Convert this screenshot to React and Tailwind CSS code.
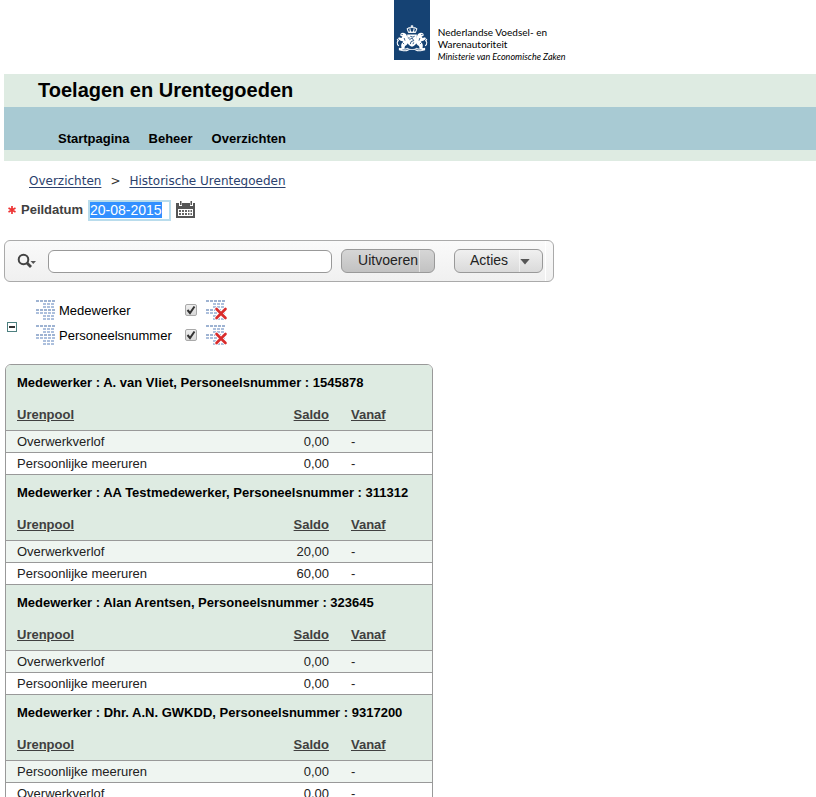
import { useEffect, useRef } from "react";

const groups = [
  { name: "A. van Vliet", number: "1545878", rows: [["Overwerkverlof", "0,00"], ["Persoonlijke meeruren", "0,00"]] },
  { name: "AA Testmedewerker", number: "311312", rows: [["Overwerkverlof", "20,00"], ["Persoonlijke meeruren", "60,00"]] },
  { name: "Alan Arentsen", number: "323645", rows: [["Overwerkverlof", "0,00"], ["Persoonlijke meeruren", "0,00"]] },
  { name: "Dhr. A.N. GWKDD", number: "9317200", rows: [["Persoonlijke meeruren", "0,00"], ["Overwerkverlof", "0,00"]] },
];

function Lion() {
  return (
    <g>
      <path d="M12 13c-1-3-5-4-7-2c-1 2 0 3 2 3l-1 2l-3-1l-1 2l3 2l3 1c-2 2-3 4-2 7l-2 2h5l1-4c2-1 4-3 4-6z" fill="#fff" />
      <path d="M3 25c-3-2-2-6 0-6M2 19l-1-2" stroke="#fff" strokeWidth="1.2" fill="none" />
      <path d="M6 12h1.500M9 16l1 3M7 21l2 2" stroke="#154273" strokeWidth=".9" />
    </g>
  );
}

function CoatOfArms() {
  return (
    <svg width="32" height="28" viewBox="0 0 36 32" aria-hidden="true">
      <Lion />
      <g transform="translate(36 0) scale(-1 1)"><Lion /></g>
      <path d="M18 1v3M16.500 2.500h3M12.500 5.500c2-2 9-2 11 0l-1.500 4h-8z" stroke="#fff" strokeWidth="1.200" fill="none" />
      <path d="M15.500 5l.8 4M20.500 5l-.8 4M14 9.500h8" stroke="#fff" strokeWidth="1.200" />
      <path d="M12.500 12h11v8c0 3-3 5-5.500 6c-2.500-1-5.500-3-5.500-6z" fill="#fff" />
      <path d="M16 14l3 1l2-1M15 18l3-2l2 3l-3 1l-1 3M20 21l-1 2M14.500 15v2" stroke="#154273" strokeWidth="1" fill="none" />
      <path d="M3 27l4 1h4l2-1c3 2 7 2 10 0l2 1h4l4-1v3l-5 1h-4c-4-2-8-2-12 0h-4l-5-1z" fill="#fff" />
      <path d="M7 29.500h4c4-2 10-2 14 0h4" stroke="#154273" strokeWidth=".7" fill="none" />
    </svg>
  );
}

function CalendarIcon() {
  return (
    <svg width="20" height="18" viewBox="0 0 20 18" aria-hidden="true">
      <path d="M0 2h3v3h3V2h8v3h3V2h2v15H0z" fill="#555" />
      <path d="M4 0h1.500v4H4zM14.500 0H16v4h-1.500z" fill="#555" />
      <path d="M2 8h15v7H2z" fill="#fff" />
      <path d="M3 9h2v2H3zM6 9h2v2H6zM9 9h2v2H9zM12 9h1.500v2H12zM14.500 9H16v2h-1.500zM3 12h2v2H3zM6 12h2v2H6zM9 12h2v2H9zM12 12h1.500v2H12zM14.500 12H16v2h-1.500z" fill="#666" />
    </svg>
  );
}

const bars = [0, 1, 2, 3, 4, 5, 6];

function BreakIcon({ remove }) {
  return (
    <svg width="22" height="20" viewBox="0 0 22 20" aria-hidden="true">
      {bars.map((i) => (
        <path
          key={i}
          d={i === 0 || i === 3 || i === 4 ? `M0 ${i * 3 + 1}H19` : `M7 ${i * 3 + 1}H19`}
          stroke={i === 0 || i === 3 ? "#7f9bc4" : "#93acd2"}
          strokeWidth="1.500"
          strokeDasharray="3 1"
        />
      ))}
      {remove && (
        <g fill="none" strokeLinecap="round">
          <path d="M10.500 9l9 9M19.500 9l-9 9" stroke="#fff" strokeWidth="4" />
          <path d="M10.500 9l9 9M19.500 9l-9 9" stroke="#d92b2b" strokeWidth="2.600" />
        </g>
      )}
    </svg>
  );
}

function BreakRow({ label }) {
  return (
    <li className="flex h-[25px] items-center">
      <BreakIcon />
      <label className="flex grow items-center text-black">
        <span className="w-[127px] pt-0.5 pl-px">{label}</span>
        <span className="grid">
          <input
            type="checkbox"
            defaultChecked
            className="peer col-start-1 row-start-1 size-3 appearance-none rounded-xs border border-[#a9a9a9] bg-linear-to-b from-[#eeeeee] to-[#d9d9d9]"
          />
          <svg className="pointer-events-none col-start-1 row-start-1 hidden peer-checked:block" width="12" height="12" viewBox="0 0 12 12" aria-hidden="true">
            <path d="M2.500 6l2.500 3L9.500 2.500" stroke="#333" strokeWidth="2" fill="none" />
          </svg>
        </span>
      </label>
      <button type="button" aria-label={`${label} verwijderen`}>
        <BreakIcon remove />
      </button>
    </li>
  );
}

function Heading({ children, className }) {
  return (
    <th scope="col" className={`h-[33px] border-b border-[#999] px-[11px] pt-0.5 ${className}`}>
      <a href="#sort" className="text-[#404040] underline underline-offset-1">{children}</a>
    </th>
  );
}

export default function App() {
  const dateRef = useRef(null);
  useEffect(() => {
    dateRef.current.focus();
    dateRef.current.select();
  }, []);

  return (
    <div className="h-screen overflow-hidden bg-white font-['Liberation_Sans',Arial,sans-serif] text-[13px] leading-4 text-[#222]">
      <header className="pl-1">
        <div className="flex h-[74px] pl-[48%]">
          <div className="flex w-9 h-[60px] items-end justify-center bg-[#154273] pb-2">
            <CoatOfArms />
          </div>
          <p className="pt-[26px] pl-2 font-[Lato,sans-serif] text-[10px] leading-3 whitespace-nowrap text-black">
            Nederlandse Voedsel- en
            <br />
            Warenautoriteit
            <br />
            <em className="text-[9px]">Ministerie van Economische Zaken</em>
          </p>
        </div>
        <h1 className="h-[33px] bg-[#deebe2] pl-[34px] text-xl leading-8 font-bold text-black">Toelagen en Urentegoeden</h1>
        <nav className="flex h-[54px] items-end gap-[19px] border-b-11 border-[#deebe2] bg-[#a8cad3] pb-[3px] pl-[54px] font-bold text-black">
          <a href="#start">Startpagina</a>
          <a href="#beheer">Beheer</a>
          <a href="#overzichten">Overzichten</a>
        </nav>
      </header>

      <main className="pl-1">
        <nav aria-label="Kruimelpad" className="flex gap-[9px] pt-3 pl-[25px] font-['DejaVu_Sans',Verdana,sans-serif] text-xs leading-4 text-[#333]">
          <a href="#overzichten" className="text-[#2b416d] underline underline-offset-2">Overzichten</a>
          <span>&gt;</span>
          <a href="#historie" className="text-[#2b416d] underline underline-offset-2">Historische Urentegoeden</a>
        </nav>

        <div className="mt-2.5 flex h-[22px] items-center pl-[3px]">
          <svg width="10" height="10" viewBox="0 0 10 10" aria-hidden="true">
            <path d="M5 1v8M1.500 3l7 4M8.500 3l-7 4" stroke="#e33" strokeWidth="1.700" />
          </svg>
          <label htmlFor="peildatum" className="w-[71px] pl-1 font-bold text-[#404040]">Peildatum</label>
          <input
            id="peildatum"
            ref={dateRef}
            defaultValue="20-08-2015"
            className="h-[21px] w-[83px] border-2 border-[#b9dcec] bg-white text-sm leading-4 text-black outline-none selection:bg-[#3390ff] selection:text-white"
          />
          <button type="button" aria-label="Kalender" className="ml-[5px]">
            <CalendarIcon />
          </button>
        </div>

        <form className="mt-[19px] flex h-[42px] w-[550px] items-center rounded-md border border-[#aaa] bg-linear-to-b from-[#fafafa] to-[#f0f0f0] pl-3 text-sm" onSubmit={(e) => e.preventDefault()}>
          <button type="button" aria-label="Zoekkolom kiezen" className="w-[31px]">
            <svg width="20" height="16" viewBox="0 0 20 16" aria-hidden="true">
              <circle cx="6.500" cy="6.500" r="4.800" stroke="#444" strokeWidth="2" fill="none" />
              <path d="M10 10l4 4" stroke="#444" strokeWidth="2.800" />
              <path d="M13.500 8h5.500l-2.750 3z" fill="#555" />
            </svg>
          </button>
          <input aria-label="Zoeken" className="h-[23px] w-[284px] rounded-md border border-[#999] bg-white px-2 outline-none" />
          <button type="submit" className="ml-[9px] h-6 w-[94px] rounded-md border border-[#999] bg-linear-to-b from-[#d6d6d6] to-[#c2c2c2]">
            <span className="block h-[22px] w-[78px] border-r border-white/50 pr-px text-right leading-5">Uitvoeren</span>
          </button>
          <button type="button" className="ml-[19px] flex h-6 w-[89px] items-center rounded-md border border-[#999] bg-linear-to-b from-[#f0f0f0] to-[#dadada]">
            <span className="block h-[22px] w-[65px] border-r border-white/50 pl-[15px] text-left leading-5">Acties</span>
            <svg className="mt-0.5" width="10" height="6" viewBox="0 0 11 7" aria-hidden="true">
              <path d="M0 0h11L5.500 6.500z" fill="#555" />
            </svg>
          </button>
          <span className="ml-0.5 h-full border-l border-white" />
        </form>

        <div className="mt-[15px] flex w-[224px]">
          <button type="button" aria-label="Inklappen" className="mt-[25px] mr-[19px] ml-[3px] flex size-2.5 shrink-0 items-center justify-center border border-[#4d8080]">
            <span className="h-0.5 w-1.5 bg-[#333]" />
          </button>
          <ul className="grow">
            <BreakRow label="Medewerker" />
            <BreakRow label="Personeelsnummer" />
          </ul>
        </div>

        <div className="mt-[17px] ml-px w-[428px] overflow-hidden rounded-t-md border border-[#999]">
          <table className="w-full table-fixed border-separate border-spacing-0 text-left">
            <colgroup>
              <col className="w-[276px]" />
              <col className="w-[58px]" />
              <col />
            </colgroup>
            {groups.map((g) => (
              <tbody key={g.number}>
                <tr className="bg-[#deebe2]">
                  <th colSpan={3} scope="colgroup" className="h-[33px] px-[11px] pt-0.5 whitespace-nowrap text-black">
                    Medewerker : {g.name}, Personeelsnummer : {g.number}
                  </th>
                </tr>
                <tr className="bg-[#deebe2]">
                  <Heading className="text-left">Urenpool</Heading>
                  <Heading className="text-right">Saldo</Heading>
                  <Heading className="text-left">Vanaf</Heading>
                </tr>
                {g.rows.map(([pool, saldo]) => (
                  <tr key={pool} className="nth-[odd]:bg-[#eff5f1]">
                    <td className="h-[22px] border-b border-[#999] px-[11px]">{pool}</td>
                    <td className="h-[22px] border-b border-[#999] px-[11px] text-right">{saldo}</td>
                    <td className="h-[22px] border-b border-[#999] px-[11px]">-</td>
                  </tr>
                ))}
              </tbody>
            ))}
          </table>
        </div>
      </main>
    </div>
  );
}
